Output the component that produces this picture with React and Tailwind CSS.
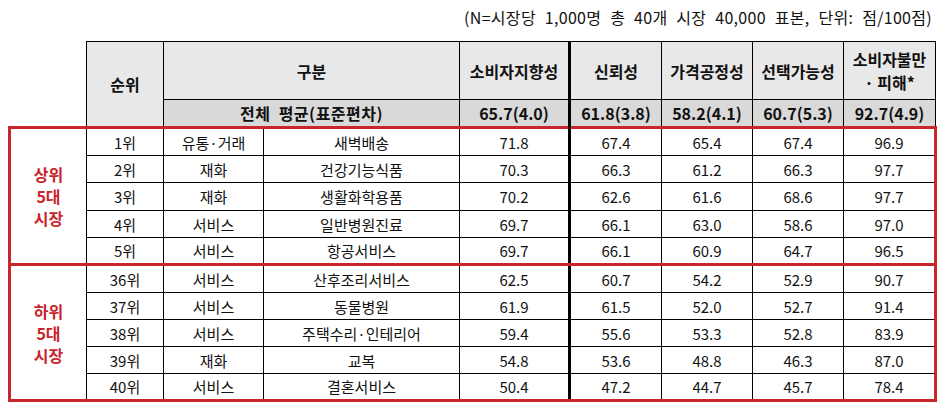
import React from "react";

const RED = "border-[#c9252c]";

const groups = [
  {
    label: ["상위", "5대", "시장"],
    heights: ["h-[28px]", "h-[27px]", "h-[28px]", "h-[27px]", "h-[27px]"],
    rows: [
      ["1위", "유통·거래", "새벽배송", "71.8", "67.4", "65.4", "67.4", "96.9"],
      ["2위", "재화", "건강기능식품", "70.3", "66.3", "61.2", "66.3", "97.7"],
      ["3위", "재화", "생활화학용품", "70.2", "62.6", "61.6", "68.6", "97.7"],
      ["4위", "서비스", "일반병원진료", "69.7", "66.1", "63.0", "58.6", "97.0"],
      ["5위", "서비스", "항공서비스", "69.7", "66.1", "60.9", "64.7", "96.5"],
    ],
  },
  {
    label: ["하위", "5대", "시장"],
    heights: ["h-[28px]", "h-[27px]", "h-[27px]", "h-[27px]", "h-[27px]"],
    rows: [
      ["36위", "서비스", "산후조리서비스", "62.5", "60.7", "54.2", "52.9", "90.7"],
      ["37위", "서비스", "동물병원", "61.9", "61.5", "52.0", "52.7", "91.4"],
      ["38위", "서비스", "주택수리·인테리어", "59.4", "55.6", "53.3", "52.8", "83.9"],
      ["39위", "재화", "교복", "54.8", "53.6", "48.8", "46.3", "87.0"],
      ["40위", "서비스", "결혼서비스", "50.4", "47.2", "44.7", "45.7", "78.4"],
    ],
  },
];

function Group({ g }) {
  return g.rows.map((r, i) => {
    const first = i === 0;
    const last = i === g.rows.length - 1;
    return (
      <tr key={i} className={g.heights[i]}>
        {first && (
          <td
            rowSpan={5}
            className={`border-l-[3px] border-t-[3px] border-b-[3px] ${RED} text-[#c9252c] font-bold text-[16px] leading-[22px] text-center align-middle`}
          >
            {g.label.map((l, k) => (
              <div key={k}>{l}</div>
            ))}
          </td>
        )}
        {r.map((c, j) => {
          let cls = "border border-black text-center align-middle p-0 text-[15px] leading-none";
          if (j === 3) cls += " border-r-[3px] border-r-black";
          if (j === 7) cls += " border-r-[3px] border-r-[#c9252c]";
          if (first) cls += " border-t-[3px] border-t-[#c9252c]";
          if (last) cls += " border-b-[3px] border-b-[#c9252c]";
          return (
            <td key={j} className={cls}>
              {c}
            </td>
          );
        })}
      </tr>
    );
  });
}

export default function App() {
  const headCell = "border border-black bg-[#e8e8e8] text-center align-middle p-0 font-bold text-[16px] leading-[20px]";
  const avgCell = "border border-black bg-[#d9d9d9] text-center align-middle p-0 font-bold text-[16px] leading-none";
  return (
    <div className="w-[948px] h-[407px] bg-white text-[#111] font-['Noto_Sans_CJK_KR','Noto_Sans',sans-serif] overflow-hidden">
      <div className="h-[41px] flex justify-end items-start pt-[6px] pr-[16px] text-[16px] leading-[22px] tracking-[0.3px] [word-spacing:5px] whitespace-nowrap">
        (N=시장당 1,000명 총 40개 시장 40,000 표본, 단위: 점/100점)
      </div>
      <table className="table-fixed border-collapse ml-[8px] w-[926px]">
        <colgroup>
          <col className="w-[77px]" />
          <col className="w-[77px]" />
          <col className="w-[100px]" />
          <col className="w-[196px]" />
          <col className="w-[110px]" />
          <col className="w-[92px]" />
          <col className="w-[91px]" />
          <col className="w-[91px]" />
          <col className="w-[92px]" />
        </colgroup>
        <thead>
          <tr className="h-[58px]">
            <td rowSpan={2} className="p-0"></td>
            <th rowSpan={2} className={headCell}>
              순위
            </th>
            <th colSpan={2} className={headCell}>
              구분
            </th>
            <th className={`${headCell} border-r-[3px]`}>소비자지향성</th>
            <th className={headCell}>신뢰성</th>
            <th className={headCell}>가격공정성</th>
            <th className={headCell}>선택가능성</th>
            <th className={`${headCell} leading-[23px]`}>
              <div>소비자불만</div>
              <div>· 피해*</div>
            </th>
          </tr>
          <tr className="h-[28px]">
            <th colSpan={2} className={`${avgCell} tracking-[0.5px]`}>
              전체&nbsp; 평균(표준편차)
            </th>
            <th className={`${avgCell} border-r-[3px]`}>65.7(4.0)</th>
            <th className={avgCell}>61.8(3.8)</th>
            <th className={avgCell}>58.2(4.1)</th>
            <th className={avgCell}>60.7(5.3)</th>
            <th className={avgCell}>92.7(4.9)</th>
          </tr>
        </thead>
        <tbody>
          {groups.map((g, k) => (
            <Group key={k} g={g} />
          ))}
        </tbody>
      </table>
    </div>
  );
}
